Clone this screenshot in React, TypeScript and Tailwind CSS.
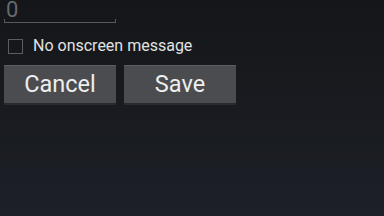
export default function App() {
  return (
    <div
      className="w-[384px] h-[216px] overflow-hidden flex flex-col bg-gradient-to-b from-[#141619] to-[#1d2027] px-1"
      style={{ fontFamily: 'Roboto, "Noto Sans", sans-serif' }}
    >
      {/* text field */}
      <div className="w-[112px] h-[27px] shrink-0 relative -mt-[4px]">
        <div className="pl-[2px] pt-[3px] text-[22px] leading-none text-[#66696d]">0</div>
        <div className="absolute left-0 right-0 bottom-0 h-[4px] border-x border-b border-[#575b5f]" />
      </div>

      {/* checkbox row */}
      <div className="flex items-center mt-[15px] h-[16px] gap-[10px] pl-[4px]">
        <div className="w-[15px] h-[15px] border border-[#5a5d61] bg-[#15171a]" />
        <span className="text-[16px] text-[#e2e2e2] leading-none">No onscreen message</span>
      </div>

      {/* buttons */}
      <div className="flex gap-[8px] mt-[11px]">
        <button className="w-[112px] h-[40px] bg-[#4b4c4f] border-t border-[#5c5d60] border-b-2 border-b-[#2a2b2e] text-[23.5px] text-[#eeeeee]">
          Cancel
        </button>
        <button className="w-[112px] h-[40px] bg-[#4b4c4f] border-t border-[#5c5d60] border-b-2 border-b-[#2a2b2e] text-[23.5px] text-[#eeeeee]">
          Save
        </button>
      </div>
    </div>
  );
}
